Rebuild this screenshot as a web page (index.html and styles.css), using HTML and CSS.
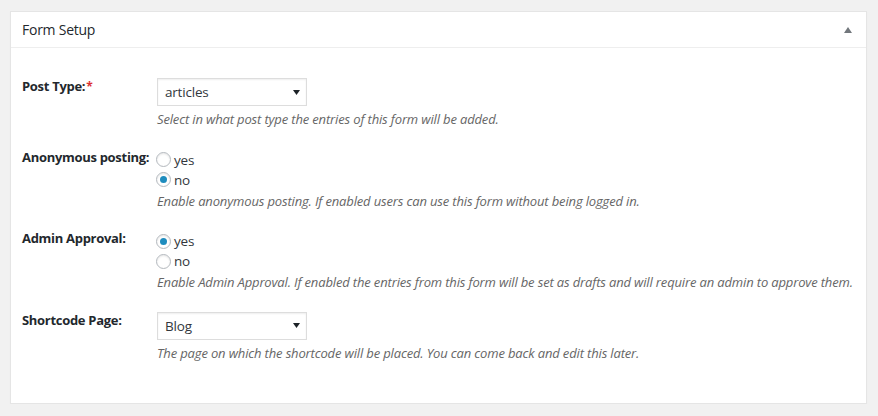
FILE: index.html
```html
<!DOCTYPE html>
<html lang="en">
<head>
<meta charset="utf-8">
<title>Form Setup</title>
<link rel="stylesheet" href="styles.css">
</head>
<body>
<div class="postbox">
  <div class="postbox-header">
    <h2 class="postbox-title">Form Setup</h2>
    <svg class="toggle" width="8" height="6" viewBox="0 0 8 6" aria-hidden="true"><polygon points="4,0 8,6 0,6" fill="#72777c"/></svg>
  </div>
  <div class="postbox-inside">
    <div class="field-row">
      <div class="field-label">Post Type:<span class="req">*</span></div>
      <div class="field-control">
        <div class="select"><span>articles</span><svg width="7" height="5" viewBox="0 0 7 5" aria-hidden="true"><polygon points="0,0 7,0 3.5,5" fill="#1d2327"/></svg></div>
        <p class="desc">Select in what post type the entries of this form will be added.</p>
      </div>
    </div>
    <div class="field-row">
      <div class="field-label">Anonymous posting:</div>
      <div class="field-control">
        <div class="radios">
          <label class="radio-line"><span class="radio"></span>yes</label>
          <label class="radio-line"><span class="radio checked"></span>no</label>
        </div>
        <p class="desc desc-after-radio">Enable anonymous posting. If enabled users can use this form without being logged in.</p>
      </div>
    </div>
    <div class="field-row">
      <div class="field-label">Admin Approval:</div>
      <div class="field-control">
        <div class="radios">
          <label class="radio-line"><span class="radio checked"></span>yes</label>
          <label class="radio-line"><span class="radio"></span>no</label>
        </div>
        <p class="desc desc-after-radio">Enable Admin Approval. If enabled the entries from this form will be set as drafts and will require an admin to approve them.</p>
      </div>
    </div>
    <div class="field-row">
      <div class="field-label">Shortcode Page:</div>
      <div class="field-control">
        <div class="select"><span>Blog</span><svg width="7" height="5" viewBox="0 0 7 5" aria-hidden="true"><polygon points="0,0 7,0 3.5,5" fill="#1d2327"/></svg></div>
        <p class="desc">The page on which the shortcode will be placed. You can come back and edit this later.</p>
      </div>
    </div>
  </div>
</div>
</body>
</html>
```

FILE: styles.css
```css
html, body {
  margin: 0;
  padding: 0;
}
body {
  background: #f1f1f1;
  font-family: "Open Sans", "Noto Sans", sans-serif;
  color: #23282d;
  font-size: 13px;
}
.postbox {
  margin: 11px 11px 0 10px;
  background: #fff;
  border: 1px solid #e5e5e5;
  box-shadow: 0 1px 1px rgba(0, 0, 0, 0.04);
}
.postbox-header {
  display: flex;
  align-items: center;
  justify-content: space-between;
  height: 35px;
  padding: 0 14px 0 11px;
  border-bottom: 1px solid #eee;
}
.postbox-title {
  margin: 0;
  font-size: 14px;
  font-weight: 400;
  line-height: 35px;
  color: #23282d;
  letter-spacing: -0.25px;
}
.toggle {
  display: block;
}
.postbox-inside {
  display: flex;
  flex-direction: column;
  gap: 19.5px;
  padding: 29px 11px 41px 11px;
}
.field-row {
  display: flex;
  align-items: flex-start;
}
.field-label {
  width: 135px;
  flex: none;
  font-weight: 700;
  font-size: 13px;
  line-height: 18px;
  color: #23282d;
  letter-spacing: -0.3px;
}
.req {
  color: #dc3232;
  margin-left: 1px;
  font-size: 12px;
  font-weight: 700;
}
.field-control {
  flex: 1;
  min-width: 0;
}
.select {
  box-sizing: border-box;
  width: 150px;
  height: 28px;
  margin-top: 1px;
  border: 1px solid #ddd;
  box-shadow: inset 0 1px 2px rgba(0, 0, 0, 0.07);
  display: flex;
  align-items: center;
  justify-content: space-between;
  padding: 0 6px 0 7px;
  font-size: 13.5px;
  color: #32373c;
  letter-spacing: -0.2px;
}
.select svg {
  display: block;
}
.desc {
  margin: 4px 0 0 0;
  font-style: italic;
  color: #666;
  font-size: 13px;
  line-height: 18px;
  letter-spacing: -0.15px;
  white-space: nowrap;
}
.desc-after-radio {
  margin-top: 2px;
}
.radios {
  margin-top: 2px;
}
.radio-line {
  display: flex;
  align-items: center;
  height: 20px;
  font-size: 13.5px;
  color: #32373c;
  letter-spacing: -0.2px;
}
.radio {
  box-sizing: border-box;
  width: 15px;
  height: 15px;
  border-radius: 50%;
  border: 1px solid #b4b9be;
  box-shadow: inset 0 1px 2px rgba(0, 0, 0, 0.1);
  margin: 0 3px 0 -1px;
  display: flex;
  align-items: center;
  justify-content: center;
  flex: none;
}
.radio.checked::after {
  content: "";
  width: 7px;
  height: 7px;
  border-radius: 50%;
  background: #1e8cbe;
}
```
